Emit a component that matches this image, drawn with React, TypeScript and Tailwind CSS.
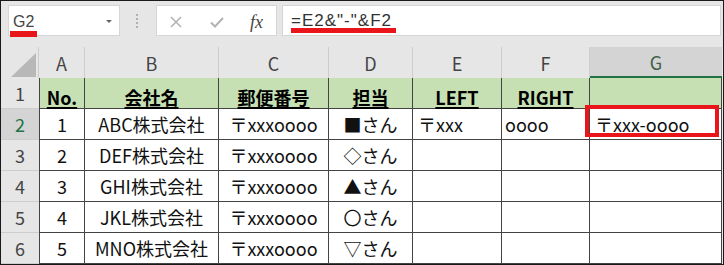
const cols = ['A', 'B', 'C', 'D', 'E', 'F', 'G']

const header = ['No.', '会社名', '郵便番号', '担当', 'LEFT', 'RIGHT', '']

const rows = [
    ['1', 'ABC株式会社', '〒xxxoooo', '■さん', '〒xxx', 'oooo', '〒xxx-oooo'],
    ['2', 'DEF株式会社', '〒xxxoooo', '◇さん', '', '', ''],
    ['3', 'GHI株式会社', '〒xxxoooo', '▲さん', '', '', ''],
    ['4', 'JKL株式会社', '〒xxxoooo', '〇さん', '', '', ''],
    ['5', 'MNO株式会社', '〒xxxoooo', '▽さん', '', '', ''],
]

// E, F, G are left aligned, the rest centered
const align = ['justify-center', 'justify-center', 'justify-center', 'justify-center', 'justify-start pl-[5px]', 'justify-start pl-[3px]', 'justify-start pl-[5px]']

function FormulaBar() {
    return (
        <div className="h-[46px] relative flex items-start pt-[4px] pl-[7px]">
            <div className="w-[112px] h-[31px] bg-white border border-[#d6d6d6] flex items-center pl-[4px] pt-[2px] relative">
                <span className="font-['Liberation_Sans'] text-[16px] text-[#444]">G2</span>
                <svg className="absolute right-[7px] top-[14px]" width="6" height="3" viewBox="0 0 6 3">
                    <polygon points="0,0 6,0 3,3" fill="#666" />
                </svg>
            </div>
            <div className="w-[36px] h-[31px] flex flex-col items-center justify-center gap-[2px] pr-[2px]">
                <span className="w-[2px] h-[2px] bg-[#b0b0b0]" />
                <span className="w-[2px] h-[2px] bg-[#b0b0b0]" />
                <span className="w-[2px] h-[2px] bg-[#b0b0b0]" />
                <span className="w-[2px] h-[2px] bg-[#b0b0b0]" />
            </div>
            <div className="w-[121px] h-[31px] bg-white border border-[#d6d6d6] flex items-center pt-[3px]">
                <svg className="ml-[13px]" width="12" height="12" viewBox="0 0 12 12">
                    <path d="M1 1 L11 11 M11 1 L1 11" stroke="#b3b3b3" strokeWidth="1.6" fill="none" />
                </svg>
                <svg className="ml-[28px]" width="14" height="11" viewBox="0 0 14 11">
                    <path d="M1 5.5 L5 9.5 L13 1" stroke="#b3b3b3" strokeWidth="2" fill="none" />
                </svg>
                <span className="ml-[26px] font-['Liberation_Serif'] italic text-[18px] text-[#444] leading-none">fx</span>
            </div>
            <div className="flex-1 ml-[5px] mr-[2px] h-[31px] bg-white border border-[#d6d6d6] flex items-center pl-[8px] pt-[1px]">
                <span className="font-['Liberation_Sans'] text-[17px] tracking-[1px] text-[#333]">=E2&amp;"-"&amp;F2</span>
            </div>
            {/* red marks from the screenshot */}
            <span className="absolute left-[9px] top-[30px] w-[27px] h-[6px] bg-[#e8151b]" />
            <span className="absolute left-[290px] top-[27px] w-[105px] h-[5px] bg-[#e8151b]" />
        </div>
    )
}

function Sheet() {
    return (
        <div className="grid grid-cols-[38px_46px_134px_110px_84px_89px_88px_132px] font-['Noto_Sans_CJK_JP',sans-serif] text-[18px] leading-[22px]">
            {/* column headers */}
            <div className="h-[31px] border-r border-[#cdcdcd] flex items-end justify-end pr-[2px] pb-[1px]">
                <svg width="25" height="24" viewBox="0 0 25 24">
                    <polygon points="25,0 25,24 0,24" fill="#b8b8b8" />
                </svg>
            </div>
            {cols.map(c => (
                <div key={c} className={c === 'G'
                    ? 'h-[31px] bg-[#d4d4d4] border-b-2 border-[#217346] flex items-center justify-center text-[#3f5f48]'
                    : 'h-[31px] border-r border-[#cdcdcd] flex items-center justify-center text-[#444]'}>
                    {c}
                </div>
            ))}

            {/* row 1 */}
            <div className="h-[31px] border-b border-[#cdcdcd] flex items-center justify-center text-[#444]">1</div>
            {header.map((h, i) => (
                <div key={i} className={`h-[31px] bg-[#c6e0b4] border-r border-b border-[#444] flex items-end justify-center font-bold ${i === 0 ? 'border-l' : ''}`}>
                    <span className="underline decoration-2 underline-offset-[2px] text-black">{h}</span>
                </div>
            ))}

            {/* rows 2 - 6 */}
            {rows.map((r, ri) => (
                <div key={ri} className="contents">
                    <div className={ri === 0
                        ? 'h-[31px] bg-[#d4d4d4] border-b border-[#cdcdcd] flex items-center justify-center text-[#217346]'
                        : 'h-[31px] border-b border-[#cdcdcd] flex items-center justify-center text-[#444]'}>
                        {ri + 2}
                    </div>
                    {r.map((v, ci) => (
                        <div key={ci} className={`h-[31px] bg-white border-r border-b border-[#444] flex items-center text-[#111] relative ${align[ci]} ${ci === 0 ? 'border-l' : ''}`}>
                            {v}
                            {ri === 0 && ci === 6 && (
                                <span className="absolute left-[-5px] top-[-4px] right-[2px] bottom-[2px] border-4 border-[#e8151b]" />
                            )}
                        </div>
                    ))}
                </div>
            ))}
        </div>
    )
}

export default function App() {
    return (
        <div className="w-[724px] h-[265px] border border-[#1a1a1a] bg-[#e6e6e6] flex flex-col overflow-hidden">
            <FormulaBar />
            <Sheet />
        </div>
    )
}
